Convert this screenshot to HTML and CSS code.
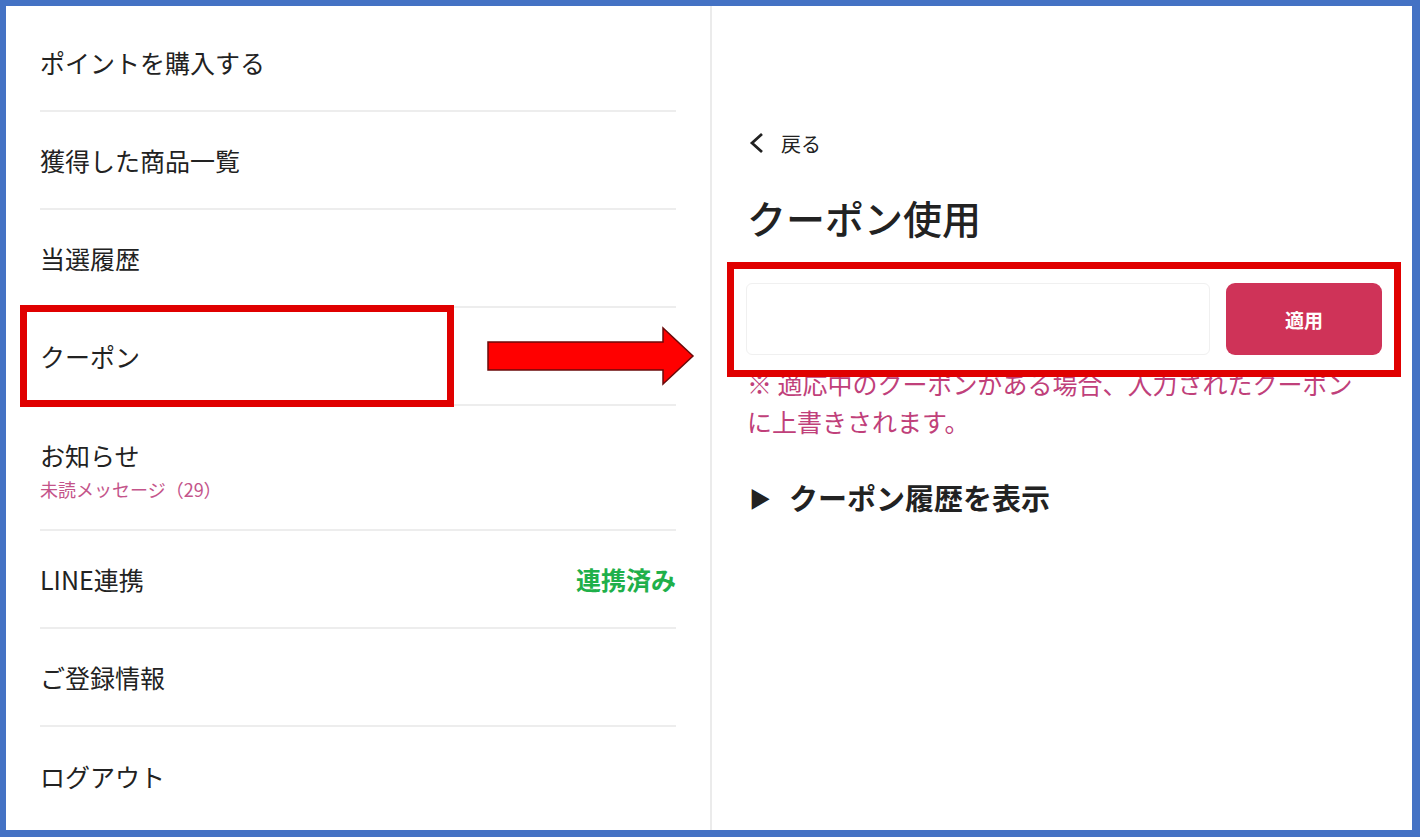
FILE: index.html
```html
<!DOCTYPE html>
<html lang="ja">
<head>
    <meta charset="UTF-8">
    <meta name="viewport" content="width=device-width, initial-scale=1.0">
    <title>クーポン使用</title>
    <link rel="stylesheet" href="styles.css">
</head>
<body>
    <div class="frame">
        <div class="menu">
            <div class="menu-item">ポイントを購入する</div>
            <div class="menu-item">獲得した商品一覧</div>
            <div class="menu-item">当選履歴</div>
            <div class="menu-item highlighted">
                クーポン
                <div class="mark mark-menu"></div>
            </div>
            <div class="menu-item tall">
                <div>お知らせ</div>
                <div class="sub">未読メッセージ（29）</div>
            </div>
            <div class="menu-item split">
                <span>LINE連携</span>
                <span class="linked">連携済み</span>
            </div>
            <div class="menu-item">ご登録情報</div>
            <div class="menu-item last">ログアウト</div>
        </div>

        <svg class="arrow" width="210" height="62" viewBox="0 0 210 62">
            <polygon points="2,16 177,16 177,2 207,30 177,58 177,44 2,44" fill="#ff0000" stroke="#6b0a0a" stroke-width="1.5"/>
        </svg>

        <div class="coupon">
            <div class="back">
                <svg width="16" height="22" viewBox="0 0 16 22">
                    <polyline points="13,2 3,11 13,20" fill="none" stroke="#222" stroke-width="2.8"/>
                </svg>
                <span>戻る</span>
            </div>
            <h1>クーポン使用</h1>
            <div class="form">
                <input class="code" type="text">
                <button class="apply">適用</button>
                <div class="mark mark-form"></div>
            </div>
            <p class="notice">※ 適応中のクーポンがある場合、入力されたクーポン<br>に上書きされます。</p>
            <div class="history">
                <span class="tri">▶</span>
                <span>クーポン履歴を表示</span>
            </div>
        </div>
    </div>
</body>
</html>
```

FILE: styles.css
```css
body {
    margin: 0;
    font-family: "Noto Sans CJK JP", "Noto Sans", sans-serif;
    color: #222;
}
.frame {
    position: relative;
    box-sizing: border-box;
    width: 1420px;
    height: 837px;
    display: flex;
    border-style: solid;
    border-color: #4472c4;
    border-width: 6px 8px 7px 6px;
    background: #fff;
    overflow: hidden;
}
.menu {
    width: 636px;
    padding: 8px 34px 0 34px;
    border-right: 2px solid #ebebeb;
}
.menu-item {
    position: relative;
    box-sizing: border-box;
    height: 98px;
    display: flex;
    flex-direction: column;
    justify-content: center;
    font-size: 25px;
    border-bottom: 2px solid #ededed;
}
.menu-item.tall {
    height: 125px;
    padding-top: 4px;
}
.menu-item.last {
    border-bottom: none;
}
.menu-item.split {
    flex-direction: row;
    align-items: center;
    justify-content: space-between;
}
.sub {
    font-size: 18px;
    color: #c4548a;
    margin-top: 3px;
}
.linked {
    color: #1fb04a;
    font-weight: bold;
}
.mark {
    position: absolute;
    box-sizing: border-box;
    border: 7px solid #e00000;
}
.mark-menu {
    left: -20px;
    top: -3px;
    width: 434px;
    height: 102px;
}
.arrow {
    position: absolute;
    left: 480px;
    top: 320px;
}
.coupon {
    flex: 1;
    padding: 125px 30px 0 37px;
}
.back {
    display: flex;
    align-items: center;
    gap: 16px;
    height: 24px;
    font-size: 20px;
}
h1 {
    margin: 39px 0 0 0;
    font-size: 39px;
    font-weight: 500;
    line-height: 46px;
    margin-left: -2px;
}
.form {
    position: relative;
    display: flex;
    gap: 16px;
    height: 72px;
    margin-top: 43px;
    margin-left: -3px;
}
.code {
    flex: 1;
    border: 1px solid #f0f0f0;
    border-radius: 6px;
    background: #fff;
}
.apply {
    width: 156px;
    border: none;
    border-radius: 9px;
    background: #cf3358;
    color: #fff;
    font-family: inherit;
    font-size: 19px;
    font-weight: bold;
}
.mark-form {
    left: -19px;
    top: -21px;
    width: 674px;
    height: 115px;
}
.notice {
    margin: 9px 0 0 -2px;
    font-size: 25px;
    line-height: 38px;
    color: #c0407a;
}
.history {
    display: flex;
    align-items: center;
    gap: 18px;
    margin-top: 37px;
    height: 40px;
    font-size: 29px;
    font-weight: bold;
}
.tri {
    font-size: 22px;
}
```
